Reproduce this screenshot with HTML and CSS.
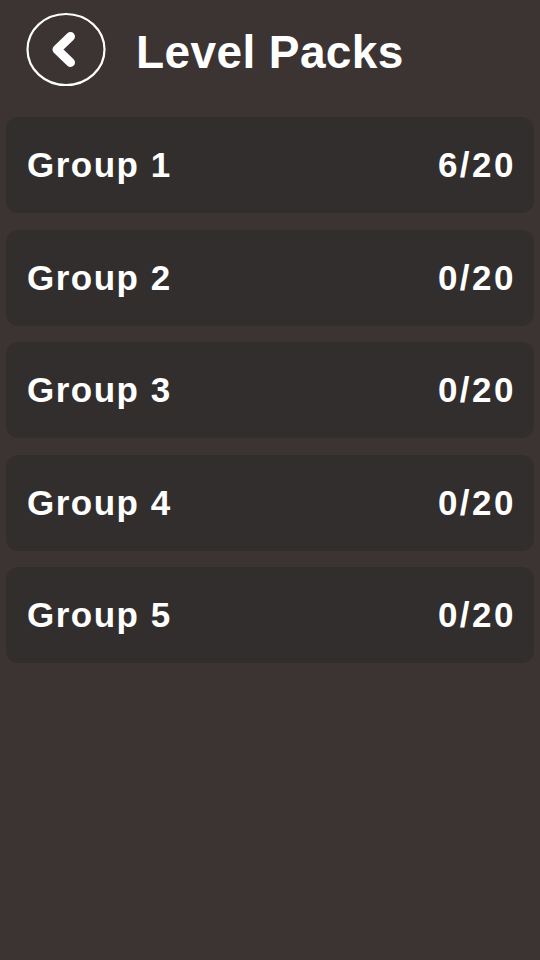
FILE: index.html
```html
<!DOCTYPE html>
<html>
<head>
<meta charset="utf-8">
<link rel="stylesheet" href="styles.css">
</head>
<body>
<div class="screen">
  <header class="header">
    <div class="back">
      <svg width="80" height="78" viewBox="0 0 80 78">
        <ellipse cx="40" cy="38.5" rx="38.5" ry="35.5" fill="none" stroke="#fff" stroke-width="2.2"/>
        <path d="M44.5 25.5 L31 38.5 L44.5 51.5" fill="none" stroke="#fff" stroke-width="9" stroke-linecap="round" stroke-linejoin="round"/>
      </svg>
    </div>
    <h1 class="title">Level Packs</h1>
  </header>
  <div class="list">
    <div class="card"><span class="name">Group 1</span><span class="count">6/20</span></div>
    <div class="card"><span class="name">Group 2</span><span class="count">0/20</span></div>
    <div class="card"><span class="name">Group 3</span><span class="count">0/20</span></div>
    <div class="card"><span class="name">Group 4</span><span class="count">0/20</span></div>
    <div class="card"><span class="name">Group 5</span><span class="count">0/20</span></div>
  </div>
</div>
</body>
</html>
```
FILE: styles.css
```css
html, body {
  margin: 0;
  padding: 0;
  background: #3c3432;
}
.screen {
  width: 540px;
  height: 960px;
  background: #3c3432;
  font-family: "Liberation Sans", Arial, sans-serif;
  color: #fff;
}
.header {
  height: 117px;
  display: flex;
  align-items: flex-start;
  padding-left: 26px;
  box-sizing: border-box;
}
.back {
  margin-top: 11px;
  width: 80px;
  height: 78px;
}
.back svg { display: block; }
.title {
  margin: 29px 0 0 30px;
  font-size: 46px;
  font-weight: bold;
  letter-spacing: 0.4px;
  line-height: 1;
}
.list {
  display: flex;
  flex-direction: column;
  gap: 16.5px;
  padding: 0 6px;
}
.card {
  height: 96px;
  background: #322e2d;
  border-radius: 12px;
  display: flex;
  align-items: center;
  justify-content: space-between;
  padding: 0 18px 0 21px;
  font-size: 35px;
  font-weight: bold;
}
.name { letter-spacing: 1.5px; }
.count { letter-spacing: 2.5px; }
```
